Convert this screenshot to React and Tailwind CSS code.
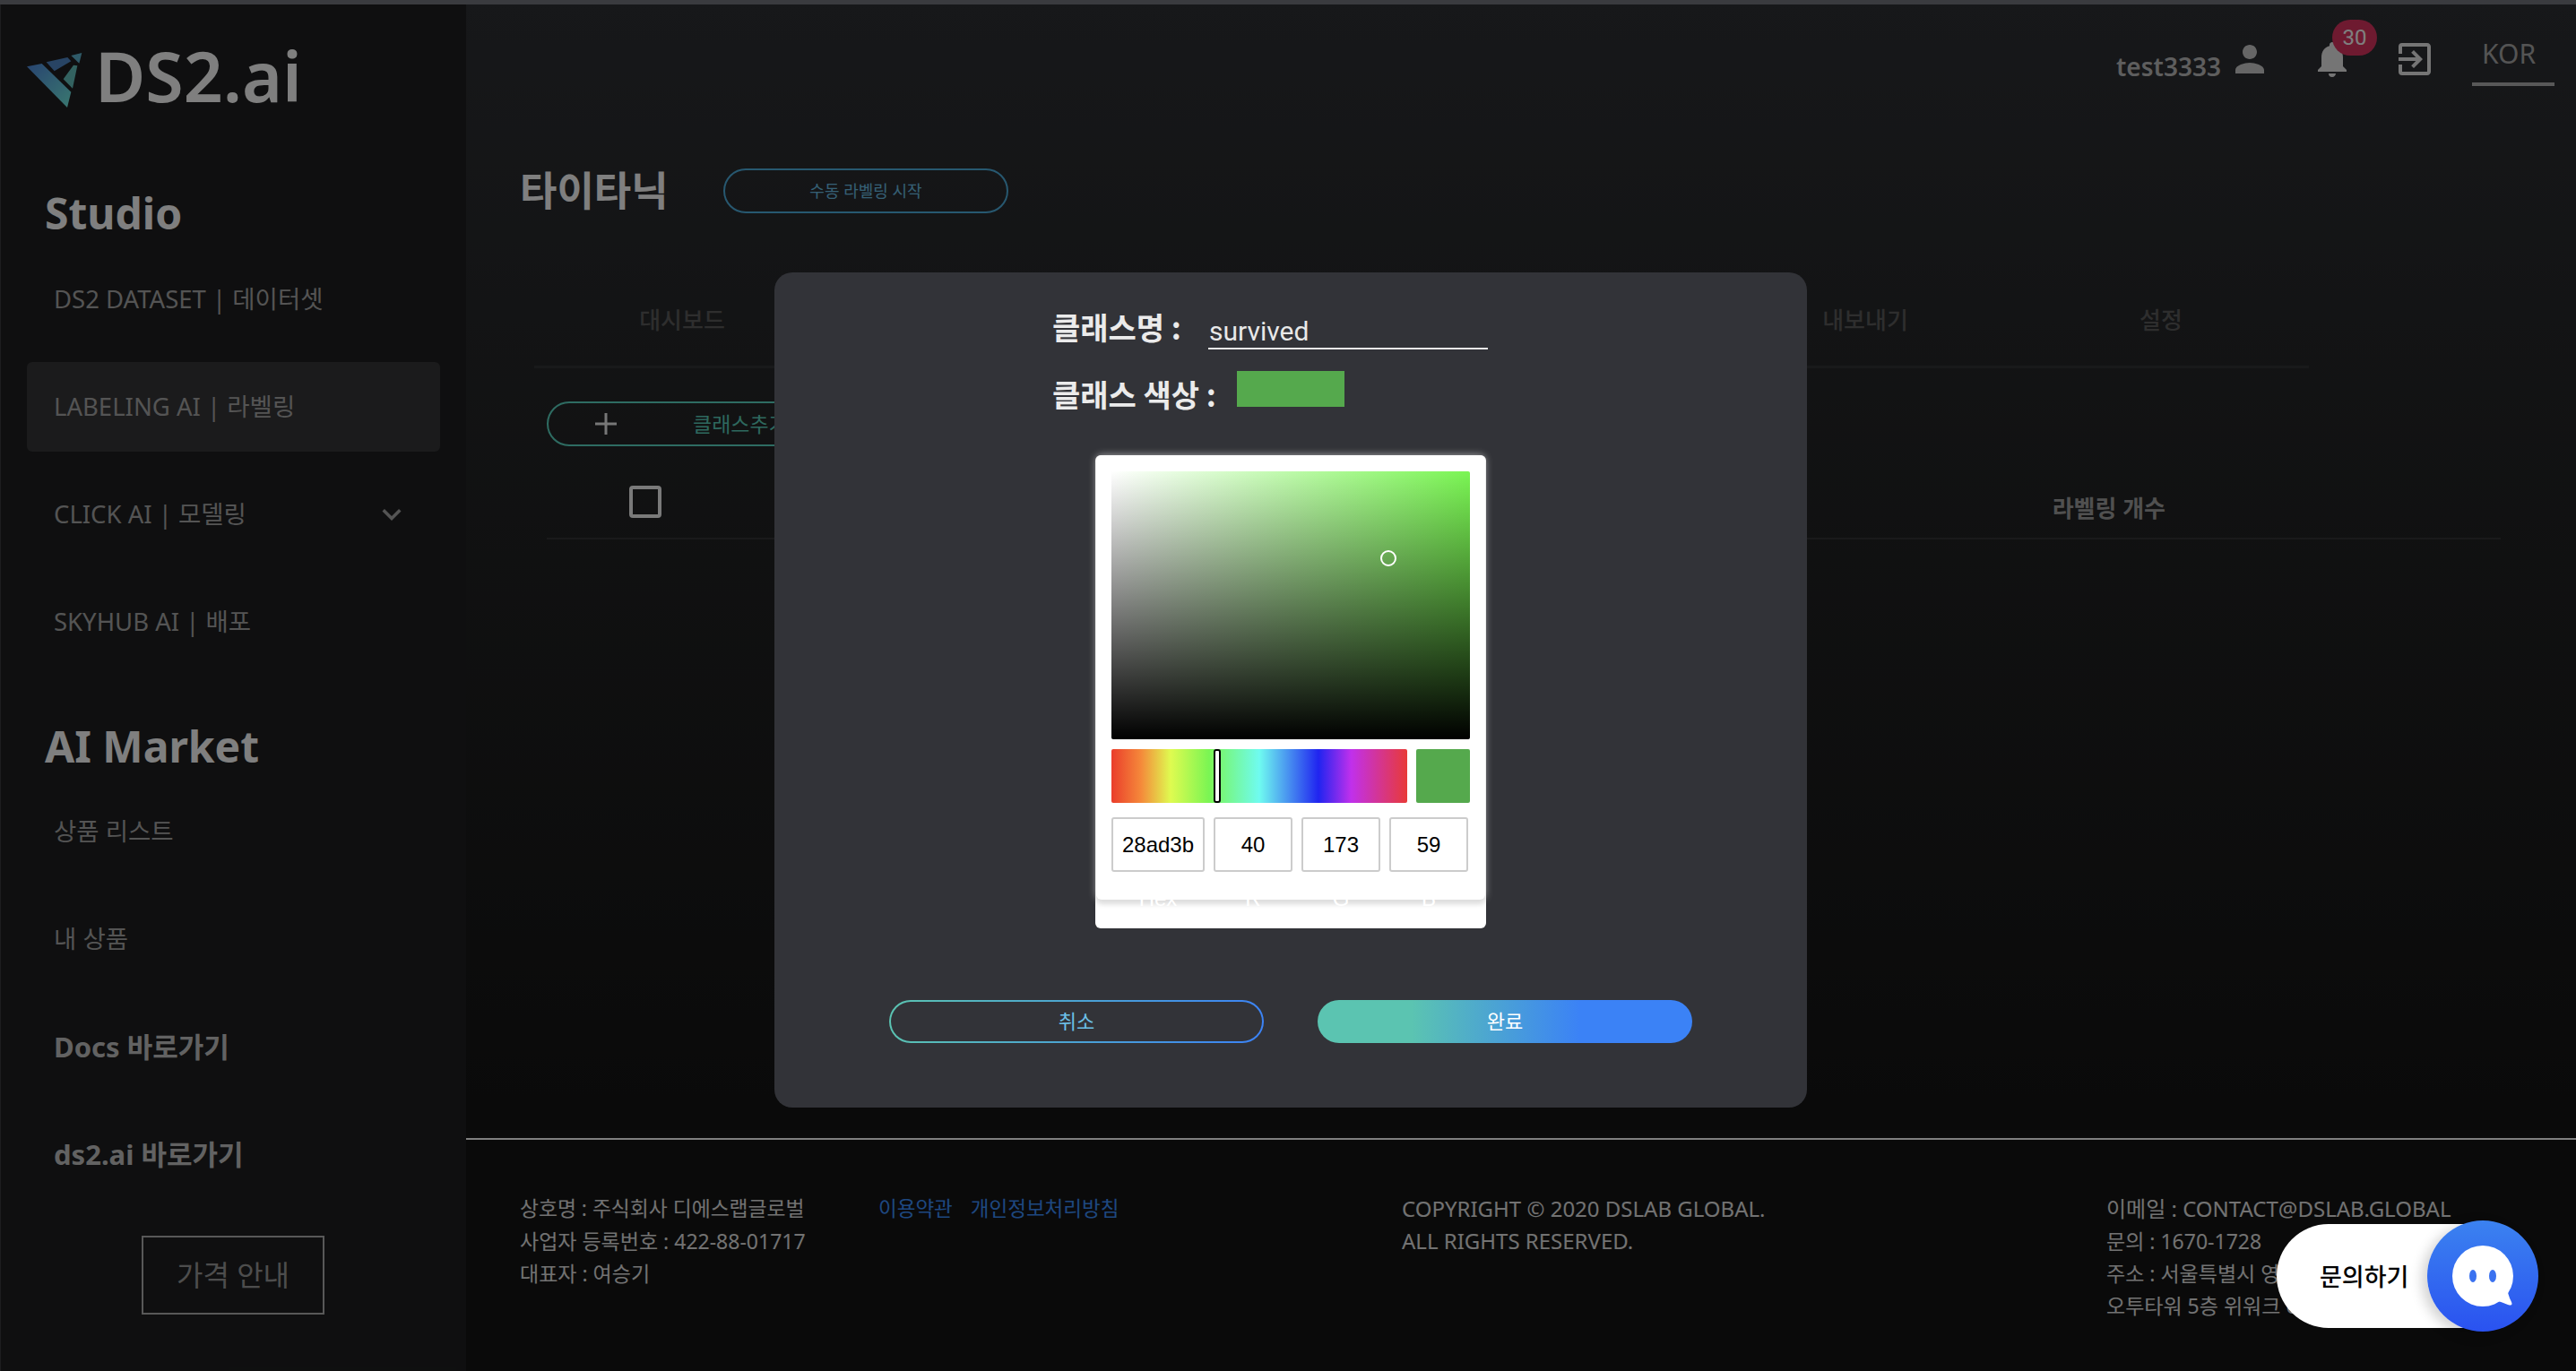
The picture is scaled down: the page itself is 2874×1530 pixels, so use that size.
import { MdExitToApp, MdKeyboardArrowDown, MdNotifications, MdPerson } from 'react-icons/md';

const sansCjk = "font-['Noto_Sans','Noto_Sans_CJK_KR',sans-serif]";

function Logo() {
  return (
    <svg viewBox="0 0 270 240" className="h-[80px] w-[90px] shrink-0">
      <defs>
        <linearGradient id="logoFill" x1="0" y1="0" x2="1" y2="1">
          <stop offset="0" stopColor="#5088e0" />
          <stop offset="1" stopColor="#74f0e0" />
        </linearGradient>
      </defs>
      <polygon fill="url(#logoFill)" points="30,73 80,63 178,158 165,210" />
      <polygon fill="#5088c8" points="95,58 166,42 178,55 122,88" />
      <polygon fill="#5fb4d0" points="178,36 214,27 205,62" />
      <polygon fill="#66c4c0" points="186,68 199,70 183,146 152,115" />
    </svg>
  );
}

function MenuItem({ children, active, bold, icon }) {
  return (
    <div className={`flex h-[100px] items-center justify-between rounded-md pl-[30px] pr-[33px] ${active ? 'bg-[#363638]' : ''} ${bold ? 'text-[31px] font-bold text-[#c4c4c4]' : 'text-[27.5px] text-[#a8a8a8]'}`}>
      <span className="whitespace-nowrap">{children}</span>
      {icon}
    </div>
  );
}

function Sidebar() {
  return (
    <aside className="flex h-full w-[519px] shrink-0 flex-col bg-[#1e1f20]">
      <div className="flex h-[203px] items-start pl-[19px] pt-[45px]">
        <Logo />
        <span className="-ml-[4px] -mt-[4px] text-[77px] font-semibold leading-[78px] text-white">DS2.ai</span>
      </div>
      <h2 className="flex h-[60px] items-center pl-[49px] text-[48px] font-bold text-white">Studio</h2>
      <nav className="mx-[29px] mt-[16px] flex flex-col gap-5">
        <MenuItem>DS2 DATASET | 데이터셋</MenuItem>
        <MenuItem active>LABELING AI | 라벨링</MenuItem>
        <MenuItem icon={<MdKeyboardArrowDown className="text-[42px] text-[#a8a8a8]" />}>CLICK AI | 모델링</MenuItem>
        <MenuItem>SKYHUB AI | 배포</MenuItem>
      </nav>
      <h2 className="mt-[59px] flex h-[60px] items-center pl-[49px] text-[48px] font-bold text-white">AI Market</h2>
      <nav className="mx-[29px] mt-[15px] flex flex-col gap-5">
        <MenuItem>상품 리스트</MenuItem>
        <MenuItem>내 상품</MenuItem>
        <MenuItem bold>Docs 바로가기</MenuItem>
        <MenuItem bold>ds2.ai 바로가기</MenuItem>
      </nav>
      <button className="ml-[157px] mt-[41px] h-[88px] w-[204px] border-2 border-[#b0b0b0] text-[32px] text-[#9a9a9a]">가격 안내</button>
    </aside>
  );
}

function Header() {
  return (
    <header className="flex h-[183px] items-start justify-end pr-[24px] pt-[37px]">
      <span className="mt-[12px] text-[28px] font-semibold leading-[40px] text-[#bcbcbc]">test3333</span>
      <MdPerson className="ml-[8px] text-[48px] text-[#cccccc]" />
      <div className="relative ml-[44px] h-[48px] w-[48px]">
        <MdNotifications className="text-[48px] text-[#eaeaea]" />
        <span className="absolute left-[24px] top-[-20px] flex h-[40px] w-[50px] items-center justify-center rounded-full bg-[#dc3460] font-['Roboto',sans-serif] text-[24px] text-white">30</span>
      </div>
      <MdExitToApp className="ml-[44px] text-[48px] text-[#eaeaea]" />
      <div className="ml-[40px] w-[92px] -translate-y-[2px]">
        <p className="pl-[11px] text-[30px] leading-[40px] text-[#a8a8a8]">KOR</p>
        <div className="mt-[12px] h-[4px] bg-[#b0b0b0]" />
      </div>
    </header>
  );
}

function Content() {
  const tabs = ['대시보드', '', '', '', '내보내기', '설정'];
  return (
    <section className="h-[1265px] bg-[linear-gradient(to_bottom,#2e3034,#222324_45%,#141414)]">
      <Header />
      <div className="flex h-[50px] items-center pl-[60px]">
        <h1 className="w-[227px] text-[45px] font-semibold text-white">타이타닉</h1>
        <button className="h-[50px] w-[318px] rounded-full border-2 border-[#4fb0e0] text-[18px] text-[#6cc0e8]">수동 라벨링 시작</button>
      </div>
      <div className="ml-[76px] mt-[67px] grid h-[106px] w-[1980px] grid-cols-6 items-center border-b-[3px] border-[#333436] pt-[2px] text-[26px] font-medium text-[#5c5c5c]">
        {tabs.map((tab, i) => (
          <span key={i} className="text-center">{tab}</span>
        ))}
      </div>
      <button className="ml-[90px] mt-[37px] flex h-[50px] w-[320px] items-center rounded-full border-2 border-[#5cd8c4] pl-[52px]">
        <svg viewBox="0 0 24 24" className="h-[24px] w-[24px] text-[#eeeeee]">
          <path d="M12 0v24M0 12h24" stroke="currentColor" strokeWidth="3" />
        </svg>
        <span className="ml-[85px] whitespace-nowrap text-[23px] text-[#5cd0bc]">클래스추가</span>
      </button>
      <div className="ml-[90px] mt-[32px] flex h-[72px] w-[2180px] items-start justify-between border-b-2 border-[#353536] pl-[92px] pr-[374px]">
        <div className="mt-[12px] h-[36px] w-[36px] rounded-[4px] border-4 border-[#f4f4f4]" />
        <span className="mt-[20px] text-[26px] font-semibold leading-[34px] text-[#a0a0a0]">라벨링 개수</span>
      </div>
    </section>
  );
}

function Footer() {
  return (
    <footer className="flex h-[260px] border-t-2 border-[#ffffff] bg-[#141414] pt-[59px] text-[23px] leading-[36px] text-[#e4e4e4]">
      <div className="ml-[60px] w-[400px]">
        <p className="text-[22.8px]">상호명 : 주식회사 디에스랩글로벌</p>
        <p>사업자 등록번호 : 422-88-01717</p>
        <p>대표자 : 여승기</p>
      </div>
      <div className="flex w-[584px] gap-[20px] text-[22.5px] text-[#3c90ff]">
        <span>이용약관</span>
        <span>개인정보처리방침</span>
      </div>
      <div className="w-[786px] text-[24px]">
        <p>COPYRIGHT © 2020 DSLAB GLOBAL.</p>
        <p>ALL RIGHTS RESERVED.</p>
      </div>
      <div className="whitespace-nowrap">
        <p className="text-[24px]">이메일 : CONTACT@DSLAB.GLOBAL</p>
        <p>문의 : 1670-1728</p>
        <p>주소 : 서울특별시 영등포구</p>
        <p>오투타워 5층 위워크 6층</p>
      </div>
    </footer>
  );
}

function ColorPicker() {
  return (
    <div className="relative ml-[358px] mt-[54px] h-[528px] w-[436px] rounded-md bg-white font-['Liberation_Sans',sans-serif]">
      <div className="absolute left-[1px] right-[1px] top-0 h-[496px] rounded-md bg-white px-[17px] pt-[18px] shadow-[0_0_8px_rgba(255,255,255,0.6),0_4px_6px_rgba(0,0,0,0.2)]">
        <div className="relative h-[299px] w-[400px] rounded-[2px] bg-[linear-gradient(to_bottom,transparent,#000),linear-gradient(to_right,#ffffff,#7af553)]">
          <span className="absolute left-[300px] top-[88px] h-[18px] w-[18px] rounded-full border-2 border-white" />
        </div>
        <div className="mt-[11px] flex h-[60px] gap-[10px]">
          <div className="relative w-[330px] rounded-[2px] bg-[linear-gradient(to_right,#ea3d2b,#f5893a_10%,#dffb50_20%,#7af553_33%,#6ffbf0_50%,#2024f0_70%,#c030ec_81%,#e83a38)]">
            <span className="absolute left-[114px] top-0 h-[60px] w-[8px] rounded-[3px] border-2 border-black bg-white" />
          </div>
          <div className="w-[60px] rounded-[2px] bg-[#55a94d]" />
        </div>
        <div className="mt-[16px] flex gap-[10px] text-center text-[24px] leading-[57px] text-black">
          <div className="h-[61px] w-[104px] rounded-[3px] border-2 border-[#cccccc]">28ad3b</div>
          <div className="h-[61px] w-[88px] rounded-[3px] border-2 border-[#cccccc]">40</div>
          <div className="h-[61px] w-[88px] rounded-[3px] border-2 border-[#cccccc]">173</div>
          <div className="h-[61px] w-[88px] rounded-[3px] border-2 border-[#cccccc]">59</div>
        </div>
      </div>
      <div className="absolute left-[18px] top-[480px] flex gap-[10px] text-center text-[24px] leading-[30px] text-white">
        <span className="w-[104px]">Hex</span>
        <span className="w-[88px]">R</span>
        <span className="w-[88px]">G</span>
        <span className="w-[88px]">B</span>
      </div>
    </div>
  );
}

function ClassModal() {
  return (
    <div className="h-[932px] w-[1152px] rounded-[20px] bg-[#323338] pt-[40px] font-['Noto_Sans_CJK_KR',sans-serif]">
      <div className="ml-[310px] flex h-[46px] items-start">
        <span className="w-[174px] whitespace-nowrap text-[34px] font-bold leading-[42px] text-[#ebebeb]">클래스명 :</span>
        <div className="h-[46px] w-[312px] border-b-2 border-[#e8e8e8] pl-[1px] font-['Roboto',sans-serif] text-[30px] leading-[52px] text-[#e8e8e8]">survived</div>
      </div>
      <div className="ml-[310px] mt-[24px] flex h-[40px] items-start">
        <span className="w-[206px] whitespace-nowrap text-[34px] font-bold leading-[52px] text-[#ebebeb]">클래스 색상 :</span>
        <div className="h-[40px] w-[120px] bg-[#55a94d]" />
      </div>
      <ColorPicker />
      <div className="ml-[128px] mt-[80px] flex gap-[60px] text-[22px]">
        <button className="h-[48px] w-[418px] rounded-full bg-[linear-gradient(100deg,#5bc4b1,#3b82f6)] p-[2px]">
          <span className="flex h-full w-full items-center justify-center rounded-full bg-[#323338] pb-[4px] text-[#6cc0e8]">취소</span>
        </button>
        <button className="h-[48px] w-[418px] rounded-full bg-[linear-gradient(90deg,#5bc4b1_25%,#3b82f6_70%)] pb-[4px] text-white">완료</button>
      </div>
    </div>
  );
}

function ChatWidget() {
  return (
    <div className="absolute left-[2540px] top-[1362px] flex h-[124px] w-[292px] items-center">
      <div className="flex h-[116px] w-[240px] items-center rounded-l-full bg-white pl-[48px] font-['Noto_Sans_CJK_KR',sans-serif] text-[27px] font-medium text-black">문의하기</div>
      <svg viewBox="0 0 124 124" className="absolute right-0 top-0 h-[124px] w-[124px] rounded-full bg-[linear-gradient(to_bottom,#3b82f0,#2a52f0)] shadow-[-6px_4px_14px_rgba(0,0,0,0.18)]">
        <circle cx="62" cy="62" r="34" fill="#fff" />
        <path d="M88 70 Q90 84 94 91 Q96 96 90 94 Q85 92 79 90 Z" fill="#fff" />
        <ellipse cx="51" cy="62" rx="4" ry="7" fill="#3b72f0" />
        <ellipse cx="73" cy="62" rx="4" ry="7" fill="#3b72f0" />
      </svg>
    </div>
  );
}

export default function App() {
  return (
    <div className={`relative h-[1530px] w-[2874px] overflow-hidden bg-[#3a3b3f] pl-px pt-[5px] ${sansCjk}`}>
      <div className="flex h-[1525px]">
        <Sidebar />
        <main className="min-w-0 flex-1">
          <Content />
          <Footer />
        </main>
      </div>
      <div className="absolute inset-x-0 bottom-0 top-[5px] bg-black/50 pl-[864px] pt-[299px]">
        <ClassModal />
      </div>
      <ChatWidget />
    </div>
  );
}
